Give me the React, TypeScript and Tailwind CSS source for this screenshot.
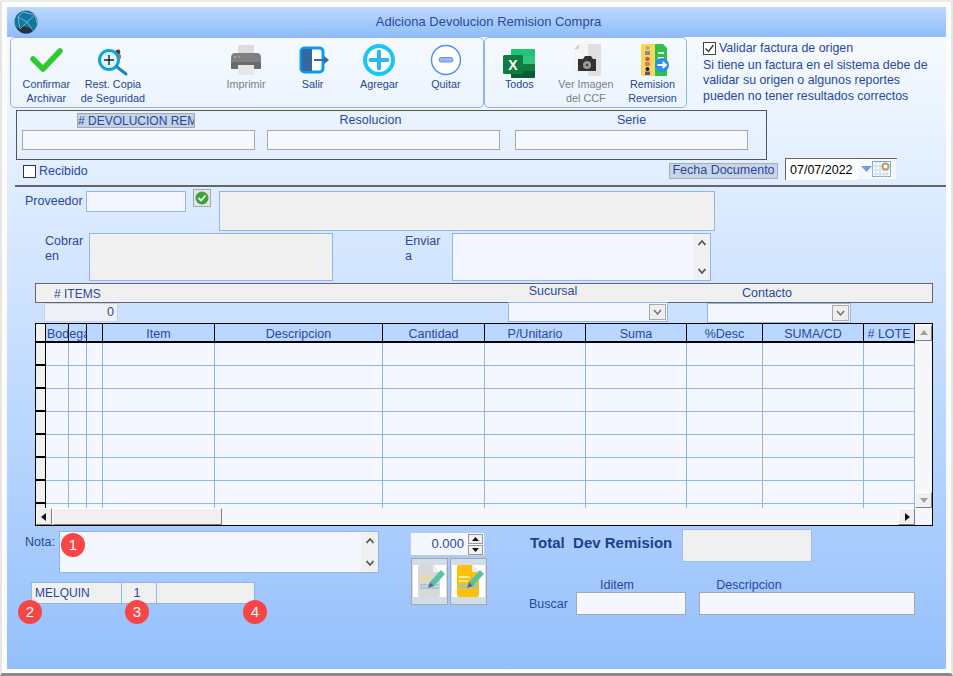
import type { ReactNode } from "react";

const columns = [
  { label: "", cls: "w-[23px]" },
  { label: "", cls: "w-[18px]" },
  { label: "", cls: "w-[16px]" },
  { label: "Item", cls: "w-[112px]" },
  { label: "Descripcion", cls: "w-[168px]" },
  { label: "Cantidad", cls: "w-[102px]" },
  { label: "P/Unitario", cls: "w-[101px]" },
  { label: "Suma", cls: "w-[101px]" },
  { label: "%Desc", cls: "w-[76px]" },
  { label: "SUMA/CD", cls: "w-[101px]" },
  { label: "# LOTE", cls: "w-[51px]" },
];

const rows = [0, 1, 2, 3, 4, 5, 6, 7];

function ConfirmIcon() {
  return (
    <svg width="34" height="34" viewBox="0 0 34 34" fill="none">
      <path d="M4 16 L14 26 L31 8" stroke="#2ecb2e" strokeWidth="5.5" strokeLinecap="round" strokeLinejoin="round" />
    </svg>
  );
}

function RestoreIcon() {
  return (
    <svg width="34" height="34" viewBox="0 0 34 34" fill="none">
      <circle cx="22" cy="9" r="2.4" fill="#5a3a3a" />
      <rect x="20" y="11" width="5" height="5" rx="1.5" fill="#f0565a" />
      <circle cx="13" cy="17" r="9.5" fill="#dff4f8" stroke="#0fa3d6" strokeWidth="3" />
      <path d="M13 12 V22 M8 17 H18" stroke="#222" strokeWidth="1.4" />
      <path d="M21 24 L30 31" stroke="#1a83c8" strokeWidth="3" strokeLinecap="round" />
    </svg>
  );
}

function PrinterIcon() {
  return (
    <svg width="34" height="34" viewBox="0 0 34 34" fill="none">
      <rect x="9" y="2" width="16" height="10" rx="1" fill="#dcdcdc" />
      <path d="M2 15 Q2 10 6 10 H28 Q32 10 32 15 V24 Q32 26 30 26 H4 Q2 26 2 24 Z" fill="#808080" />
      <rect x="2" y="19" width="30" height="7" rx="1" fill="#6a6a6a" />
      <circle cx="6" cy="14" r="1" fill="#b5b5b5" />
      <circle cx="10" cy="14" r="1" fill="#a5a5a5" />
      <rect x="9" y="22" width="16" height="10" fill="#e6e6e6" />
    </svg>
  );
}

function ExitIcon() {
  return (
    <svg width="34" height="34" viewBox="0 0 34 34" fill="none">
      <rect x="5" y="5" width="22" height="24" rx="3.5" fill="#fff" stroke="#0a9bf5" strokeWidth="3" />
      <path d="M5.5 8 Q5.5 6 7.5 6 H16 V28 H7.5 Q5.5 28 5.5 26 Z" fill="#35689f" />
      <path d="M18 17 H30" stroke="#35689f" strokeWidth="2" />
      <path d="M28 13 L33 17 L28 21 Z" fill="#35689f" />
    </svg>
  );
}

function AddIcon() {
  return (
    <svg width="34" height="34" viewBox="0 0 34 34" fill="none">
      <circle cx="17" cy="17" r="14" fill="#fff" stroke="#1ac6f8" strokeWidth="4" />
      <path d="M17 8.5 V25.5 M8.5 17 H25.5" stroke="#2eb6ee" strokeWidth="4" strokeLinecap="round" />
    </svg>
  );
}

function RemoveIcon() {
  return (
    <svg width="34" height="34" viewBox="0 0 34 34" fill="none">
      <circle cx="17" cy="17" r="14.5" fill="#fff" stroke="#4d8ef2" strokeWidth="1.4" />
      <rect x="10" y="14.5" width="14" height="4.5" rx="2.2" fill="#9db9f2" stroke="#5a90ee" strokeWidth="1" />
    </svg>
  );
}

function ExcelIcon() {
  return (
    <svg width="34" height="36" viewBox="0 0 34 36" fill="none">
      <rect x="9" y="6" width="24" height="29" rx="1.5" fill="#21a366" />
      <path d="M9 7.5 Q9 6 10.5 6 H31.5 Q33 6 33 7.5 V13 H9 Z" fill="#1fc477" />
      <rect x="21" y="13" width="12" height="8" fill="#33c481" />
      <rect x="21" y="21" width="12" height="7" fill="#107c41" />
      <path d="M9 28 H33 V33.5 Q33 35 31.5 35 H10.5 Q9 35 9 33.5 Z" fill="#0b5c33" />
      <rect x="1" y="12" width="20" height="19" rx="1.5" fill="#107c41" />
      <text x="11" y="26.5" textAnchor="middle" fontSize="14" fontWeight="700" fill="#fff" fontFamily="Liberation Sans, sans-serif">X</text>
    </svg>
  );
}

function CameraDocIcon() {
  return (
    <svg width="34" height="34" viewBox="0 0 34 34" fill="none">
      <path d="M5 6 L10 1 H19 V33 H5 Z" fill="#f4f4f4" />
      <rect x="19" y="1" width="13" height="32" fill="#e0e0e0" />
      <path d="M5 6 L10 1 V6 Z" fill="#d0d0d0" />
      <path d="M9 16 H14 L16 13 H22 L24 16 H27 V28 H9 Z" fill="#333" />
      <circle cx="18" cy="22" r="4" fill="#999" />
      <circle cx="18" cy="22" r="1.3" fill="#444" />
    </svg>
  );
}

function ReversionIcon() {
  return (
    <svg width="34" height="34" viewBox="0 0 34 34" fill="none">
      <rect x="6" y="1" width="15" height="32" fill="#f6d95c" />
      <path d="M20 1 H28 L32 5 V33 H20 Z" fill="#2fbf4c" />
      <path d="M23 10 H29 M23 15 H29 M23 20 H27" stroke="#e6f8ea" strokeWidth="2" />
      <circle cx="12.5" cy="5" r="2" fill="#c9a07a" />
      <rect x="10" y="8" width="5" height="4" fill="#8a8f9c" />
      <circle cx="12.5" cy="16" r="2.2" fill="#c8554a" />
      <rect x="10" y="19" width="5" height="4" fill="#d77c6c" />
      <circle cx="12.5" cy="26" r="2" fill="#222" />
      <rect x="10" y="28.5" width="5" height="3.5" fill="#6a4aa0" />
      <circle cx="27" cy="22" r="7" fill="#2a8ef2" />
      <path d="M22.5 22 H30 M27.5 19 L31 22 L27.5 25" stroke="#fff" strokeWidth="1.8" />
    </svg>
  );
}

function NoteIcon({ fill, lines }: { fill: string; lines: string }) {
  return (
    <svg width="33" height="32" viewBox="0 0 33 32" fill="none">
      <rect width="33" height="32" fill="#fff" />
      <path d="M5 2 Q5 0 7 0 H20 L27 7 V30 Q27 32 25 32 H7 Q5 32 5 30 Z" fill={fill} />
      <path d="M20 0 L27 7 H20 Z" fill="#eeeeee" />
      <path d="M7 12 H18 M7 16 H16" stroke={lines} strokeWidth="1.5" />
      <path d="M7 20 H26 M7 23 H26" stroke="#8fc6d8" strokeWidth="1.5" />
      <path d="M17 17 L28 5 L32 9 L21 21 Z" fill="#56c2a6" />
      <path d="M17 17 L21 21 L15 23 Z" fill="#5a6a78" />
    </svg>
  );
}

function GlobeLogo() {
  return (
    <svg width="24" height="24" viewBox="0 0 24 24" fill="none">
      <circle cx="12" cy="12" r="11.5" fill="#11779f" />
      <path d="M3 18 Q10 14 20 20 Q16 24 12 23.5 Q6 23.5 3 18 Z" fill="#2b2f3d" />
      <path d="M4 7 L13 12 L21 5 M13 12 L19 21 M4 7 L6 19 M13 12 L6 19 M9 2 L4 7 M9 2 L21 5 M21 5 L23 13" stroke="#a9c6d8" strokeWidth="0.7" />
    </svg>
  );
}

function CalendarIcon() {
  return (
    <svg width="19" height="16" viewBox="0 0 19 16" fill="none">
      <rect x="0.5" y="0.5" width="18" height="15" fill="#fff" stroke="#7aa6dc" />
      <path d="M0 5 H13 M0 9 H19 M0 13 H19 M4 1 V16 M8 1 V16 M12 1 V16 M15 9 V16" stroke="#c3d6ef" />
      <circle cx="13.5" cy="5.5" r="3" fill="#fff" stroke="#bb9d5c" strokeWidth="2" />
    </svg>
  );
}

function ToolButton({ icon, label, muted }: { icon: ReactNode; label: ReactNode; muted?: boolean }) {
  return (
    <div className={`flex w-[66.6px] shrink-0 flex-col items-center pt-[5px] text-center text-[10.8px] leading-[14px] ${muted ? "text-[#7a7f88]" : "text-[#26468f]"}`}>
      <div className="flex h-[34px] items-start justify-center">{icon}</div>
      <div className="whitespace-nowrap">{label}</div>
    </div>
  );
}

function ScrollButton({ dir, cls }: { dir: "up" | "down" | "left" | "right"; cls: string }) {
  const points = {
    up: "5,2 1,7 9,7",
    down: "1,3 9,3 5,8",
    left: "7,1 7,9 2,5",
    right: "3,1 3,9 8,5",
  }[dir];
  const solid = dir === "left" || dir === "right";
  return (
    <div className={`flex shrink-0 items-center justify-center border border-b-[#808080] border-l-white border-r-[#808080] border-t-white bg-[#f0f0f0] ${cls}`}>
      <svg width="10" height="10" viewBox="0 0 10 10">
        <polygon points={points} fill={solid ? "#111" : "#a0a0a0"} />
      </svg>
    </div>
  );
}

function MemoScroll() {
  return (
    <div className="flex h-full w-[17px] shrink-0 flex-col items-center justify-between bg-[#f0f0f0] py-[5px]">
      <svg width="10" height="8" viewBox="0 0 10 8" fill="none">
        <path d="M1.5 6 L5 2 L8.5 6" stroke="#555" strokeWidth="1.8" />
      </svg>
      <svg width="10" height="8" viewBox="0 0 10 8" fill="none">
        <path d="M1.5 2 L5 6 L8.5 2" stroke="#555" strokeWidth="1.8" />
      </svg>
    </div>
  );
}

function ComboBox({ cls }: { cls: string }) {
  return (
    <div className={`flex h-[20px] shrink-0 items-center justify-end border border-[#8fb4ee] bg-[#f4f7ff] pr-[1px] ${cls}`}>
      <div className="flex h-[16px] w-[17px] items-center justify-center border border-[#a8a8a8] bg-[#eeeeee]">
        <svg width="9" height="6" viewBox="0 0 9 6" fill="none">
          <path d="M1 1 L4.5 5 L8 1" stroke="#666" strokeWidth="1.2" />
        </svg>
      </div>
    </div>
  );
}

function Badge({ n, cls }: { n: number; cls: string }) {
  return (
    <div className={`absolute flex h-[24px] w-[24px] items-center justify-center rounded-full bg-[#f84646] text-[15px] text-white ${cls}`}>
      {n}
    </div>
  );
}

export default function App() {
  return (
    <div className="relative h-[676px] w-[953px] overflow-hidden border-x-2 border-b-[3px] border-t-2 border-x-[#e6e6e6] border-b-[#8a8a8a] border-t-[#ebebeb] bg-[#fdfdfd] pl-[5px] pt-[5px] font-['Liberation_Sans',Arial,sans-serif] text-[12.5px] text-[#2a47a0]">
      <div className="relative flex h-[662px] w-[939px] flex-col bg-gradient-to-b from-[#fbfdff] to-[#95c0fc]">
        {/* title bar */}
        <div className="relative flex h-[30px] shrink-0 items-center justify-center bg-gradient-to-b from-[#bcd9ff] to-[#8fbcf9] pl-[24px] text-[13px] text-[#2a4a9a]">
          <div className="absolute left-[7px] top-[3px]">
            <GlobeLogo />
          </div>
          Adiciona Devolucion Remision Compra
        </div>

        {/* toolbar + origin note */}
        <div className="ml-[3px] flex h-[71px] shrink-0">
          <div className="flex h-[71px] w-[474px] rounded-[5px] border border-[#8fb4ee] pl-[2px]">
            <ToolButton icon={<ConfirmIcon />} label={<>Confirmar<br />Archivar</>} />
            <ToolButton icon={<RestoreIcon />} label={<>Rest. Copia<br />de Seguridad</>} />
            <div className="w-[66.6px] shrink-0" />
            <ToolButton icon={<PrinterIcon />} label="Imprimir" muted />
            <ToolButton icon={<ExitIcon />} label="Salir" />
            <ToolButton icon={<AddIcon />} label="Agregar" />
            <ToolButton icon={<RemoveIcon />} label="Quitar" />
          </div>
          <div className="flex h-[71px] w-[203px] rounded-[5px] border border-[#8fb4ee] pl-[1px]">
            <ToolButton icon={<ExcelIcon />} label="Todos" />
            <ToolButton icon={<CameraDocIcon />} label={<>Ver Imagen<br />del CCF</>} muted />
            <ToolButton icon={<ReversionIcon />} label={<>Remision<br />Reversion</>} />
          </div>
          <div className="ml-[16px] whitespace-nowrap pt-[4px] text-[12.4px] leading-[15.5px]">
            <div className="flex items-center">
              <div className="flex h-[13px] w-[13px] items-center justify-center border border-[#444] bg-white">
                <svg width="11" height="11" viewBox="0 0 11 11" fill="none">
                  <path d="M1.5 5.5 L4.5 8.5 L9.5 2" stroke="#333" strokeWidth="1.3" />
                </svg>
              </div>
              <span className="ml-[3px]">Validar factura de origen</span>
            </div>
            <div className="mt-[1px]">Si tiene un factura en el sistema debe de</div>
            <div>validar su origen o algunos reportes</div>
            <div>pueden no tener resultados correctos</div>
          </div>
        </div>

        {/* document panel */}
        <div className="ml-[9px] mt-[2px] h-[50px] w-[751px] shrink-0 border border-[#555555] pl-[5px]">
          <div className="flex h-[19px]">
            <div className="ml-[55px] mt-[2px] h-[15px] w-[118px] overflow-hidden whitespace-nowrap border border-[#a0a8b4] bg-[#c5d3e6] text-left text-[12px] leading-[14px]">
              # DEVOLUCION REMISION
            </div>
            <div className="ml-[59px] w-[233px] text-center leading-[19px]">Resolucion</div>
            <div className="ml-[28px] w-[233px] text-center leading-[19px]">Serie</div>
          </div>
          <div className="flex gap-[12px]">
            <div className="h-[20px] w-[233px] border border-[#a8a8a8] bg-[#f5f8ff]" />
            <div className="h-[20px] w-[233px] border border-[#a8a8a8] bg-[#f5f8ff]" />
            <div className="ml-[3px] h-[20px] w-[233px] border border-[#a8a8a8] bg-[#f5f8ff]" />
          </div>
        </div>

        {/* recibido + fecha */}
        <div className="mt-[-2px] flex h-[22px] shrink-0 items-center">
          <div className="ml-[16px] mt-[5px] h-[13px] w-[13px] border border-[#333] bg-white" />
          <span className="ml-[3px] mt-[5px] w-[50px]">Recibido</span>
          <div className="ml-[580px] mt-[3px] flex h-[16px] w-[109px] items-center justify-center whitespace-nowrap border border-[#a3adbb] bg-[#c8d4e4]">
            Fecha Documento
          </div>
          <div className="ml-[7px] flex h-[22px] w-[112px] items-center border-l border-t border-[#666] bg-white">
            <span className="ml-[4px] w-[68px] pt-[1px] text-black">07/07/2022</span>
            <div className="flex h-full flex-1 items-center border-b border-r border-b-[#e8edf4] border-r-[#e8edf4] bg-[#f6f8fb] pl-[3px]">
              <svg width="11" height="6" viewBox="0 0 11 6">
                <polygon points="0,0 11,0 5.5,6" fill="#6f9fe0" />
              </svg>
              <CalendarIcon />
            </div>
          </div>
        </div>

        <div className="ml-[8px] mt-[5px] h-[2px] w-[931px] shrink-0 bg-[#666666]" />

        {/* proveedor */}
        <div className="mt-[2px] flex h-[42px] shrink-0">
          <span className="ml-[18px] mt-[3px] w-[61px]">Proveedor</span>
          <div className="mt-[2px] h-[21px] w-[100px] border border-[#8fb4ee] bg-[#f4f7ff]" />
          <div className="ml-[7px] flex h-[18px] w-[18px] items-center justify-center border border-[#a8a8a8] bg-[#dfe5ec]">
            <svg width="14" height="14" viewBox="0 0 14 14" fill="none">
              <circle cx="7" cy="7" r="6.5" fill="#3aa33a" />
              <path d="M3.5 7 L6 9.5 L10.5 4.5" stroke="#fff" strokeWidth="1.8" />
            </svg>
          </div>
          <div className="ml-[8px] mt-[2px] h-[40px] w-[496px] border border-[#8fb4ee] bg-[#f0f0f0]" />
        </div>

        {/* cobrar / enviar */}
        <div className="mt-[2px] flex h-[48px] shrink-0">
          <div className="ml-[38px] w-[44px] pt-[1px] leading-[15px]">Cobrar<br />en</div>
          <div className="h-[48px] w-[244px] border border-[#8fb4ee] bg-[#f0f0f0]" />
          <div className="ml-[72px] w-[47px] pt-[1px] leading-[15px]">Enviar<br />a</div>
          <div className="flex h-[48px] w-[259px] justify-end border border-[#8fb4ee] bg-[#f4f7ff]">
            <MemoScroll />
          </div>
        </div>

        {/* items bar */}
        <div className="ml-[28px] mt-[2px] flex h-[20px] w-[898px] shrink-0 border border-[#666666] bg-[#f0f0f0] leading-[18px]">
          <span className="ml-[18px] mt-[1px] w-[46px] whitespace-nowrap text-[12px]">#&nbsp;ITEMS</span>
          <span className="ml-[408px] mt-[-2px] w-[90px] text-center">Sucursal</span>
          <span className="ml-[124px] w-[90px] text-center">Contacto</span>
        </div>

        {/* items counters */}
        <div className="flex h-[20px] shrink-0">
          <div className="ml-[37px] flex h-[19px] w-[74px] items-center justify-end border border-[#c3d3ea] bg-[#eef1f6] pr-[3px]">0</div>
          <ComboBox cls="ml-[390px] mt-[-1px] w-[160px]" />
          <ComboBox cls="ml-[39px] w-[144px]" />
        </div>

        {/* grid */}
        <div className="ml-[28px] flex h-[203px] w-[898px] shrink-0 flex-col border border-black bg-[#f6f7fa]">
          <div className="flex h-[184px] shrink-0">
            <div className="w-[879px] shrink-0">
              <div className="flex h-[19px]">
                <div className="h-[19px] w-[10px] shrink-0 border-b-2 border-r border-b-black border-r-black bg-[#f0f0f0]" />
                {columns.map((col, i) => (
                  <div key={i} className={`h-[19px] shrink-0 whitespace-nowrap border-b-2 border-r border-b-black border-r-black bg-[#b9d7ff] text-center leading-[20px] ${i === 0 ? "relative z-10" : ""} ${col.cls}`}>
                    {i === 0 ? (
                      <span className="absolute left-[1px] top-0 block w-[40px] overflow-hidden text-left">Bodega</span>
                    ) : (
                      col.label
                    )}
                  </div>
                ))}
              </div>
              <div className="h-[165px] overflow-hidden">
                {rows.map((r) => (
                  <div key={r} className="flex h-[23px]">
                    <div className="h-[23px] w-[10px] shrink-0 border-b-2 border-r border-b-black border-r-black bg-[#f0f0f0]" />
                    {columns.map((col, i) => (
                      <div key={i} className={`h-[23px] shrink-0 border-b border-r border-[#8fb4ee] bg-[#f4f7ff] ${col.cls}`} />
                    ))}
                  </div>
                ))}
              </div>
            </div>
            <div className="flex w-[17px] shrink-0 flex-col justify-between">
              <ScrollButton dir="up" cls="mt-[1px] h-[16px] w-[17px]" />
              <ScrollButton dir="down" cls="h-[16px] w-[17px]" />
            </div>
          </div>
          <div className="flex h-[17px] shrink-0">
            <ScrollButton dir="left" cls="h-[17px] w-[16px]" />
            <div className="ml-[1px] h-[17px] w-[169px] border border-b-[#808080] border-l-white border-r-[#808080] border-t-white bg-[#f0f0f0]" />
            <div className="flex-1" />
            <ScrollButton dir="right" cls="h-[17px] w-[17px]" />
            <div className="h-[17px] w-[17px] bg-[#f4f7ff]" />
          </div>
        </div>

        {/* bottom area */}
        <div className="flex flex-1">
          <div className="ml-[18px] mt-[5px] w-[354px] shrink-0">
            <div className="flex h-[42px]">
              <span className="w-[34px] pt-[2px]">Nota:</span>
              <div className="flex h-[42px] w-[320px] justify-end border border-[#8fb4ee] bg-[#f4f7ff]">
                <MemoScroll />
              </div>
            </div>
            <div className="ml-[6px] mt-[9px] flex h-[22px]">
              <div className="flex h-[22px] w-[91px] items-center border border-[#8fb4ee] bg-[#f0f0f0] pl-[3px] text-[12px]">MELQUIN</div>
              <div className="flex h-[22px] w-[35px] items-center justify-center border-y border-r border-[#8fb4ee] bg-[#f0f0f0] pr-[4px]">1</div>
              <div className="h-[22px] w-[98px] border-y border-r border-[#8fb4ee] bg-[#f0f0f0]" />
            </div>
          </div>

          <div className="ml-[31px] mt-[6px] w-[77px] shrink-0">
            <div className="flex h-[24px] w-[75px] items-center justify-end border border-[#b9cce8] bg-[#f4f7ff] pr-[1px]">
              <span className="mr-[4px] text-[13px]">0.000</span>
              <div className="flex flex-col gap-[1px]">
                <div className="flex h-[10px] w-[15px] items-center justify-center border border-[#999] bg-[#f0f0f0]">
                  <svg width="7" height="4" viewBox="0 0 7 4"><polygon points="3.5,0 7,4 0,4" fill="#111" /></svg>
                </div>
                <div className="flex h-[10px] w-[15px] items-center justify-center border border-[#999] bg-[#f0f0f0]">
                  <svg width="7" height="4" viewBox="0 0 7 4"><polygon points="0,0 7,0 3.5,4" fill="#111" /></svg>
                </div>
              </div>
            </div>
            <div className="ml-[1px] mt-[2px] flex gap-[2px]">
              <div className="flex h-[47px] w-[37px] items-start justify-center border border-[#a8a8a8] bg-[#d3dde8] pt-[6px]">
                <NoteIcon fill="#d8d8d8" lines="#f5dc8a" />
              </div>
              <div className="flex h-[47px] w-[37px] items-start justify-center border border-[#a8a8a8] bg-[#d3dde8] pt-[6px]">
                <NoteIcon fill="#ffc107" lines="#fff3c4" />
              </div>
            </div>
          </div>

          <div className="ml-[43px] mt-[3px]">
            <div className="flex h-[33px] items-center">
              <span className="mt-[-4px] w-[152px] whitespace-pre text-[15px] font-bold text-[#1d3f8e]">Total  Dev Remision</span>
              <div className="h-[33px] w-[130px] border border-[#a5bde4] bg-[#f0f0f0]" />
            </div>
            <div className="mt-[15px] flex h-[15px] leading-[17px]">
              <span className="ml-[32px] w-[110px] text-center">Iditem</span>
              <span className="ml-[27px] w-[100px] text-center">Descripcion</span>
            </div>
            <div className="ml-[-1px] flex h-[23px] items-center">
              <span className="mt-[2px] w-[47px]">Buscar</span>
              <div className="h-[23px] w-[110px] border border-[#a8a8a8] bg-[#f4f7ff]" />
              <div className="ml-[13px] h-[23px] w-[216px] border border-[#a8a8a8] bg-[#f4f7ff]" />
            </div>
          </div>
        </div>

        <Badge n={1} cls="left-[54px] top-[526px]" />
        <Badge n={2} cls="left-[11px] top-[593px]" />
        <Badge n={3} cls="left-[118px] top-[593px]" />
        <Badge n={4} cls="left-[236px] top-[593px]" />
      </div>
    </div>
  );
}
